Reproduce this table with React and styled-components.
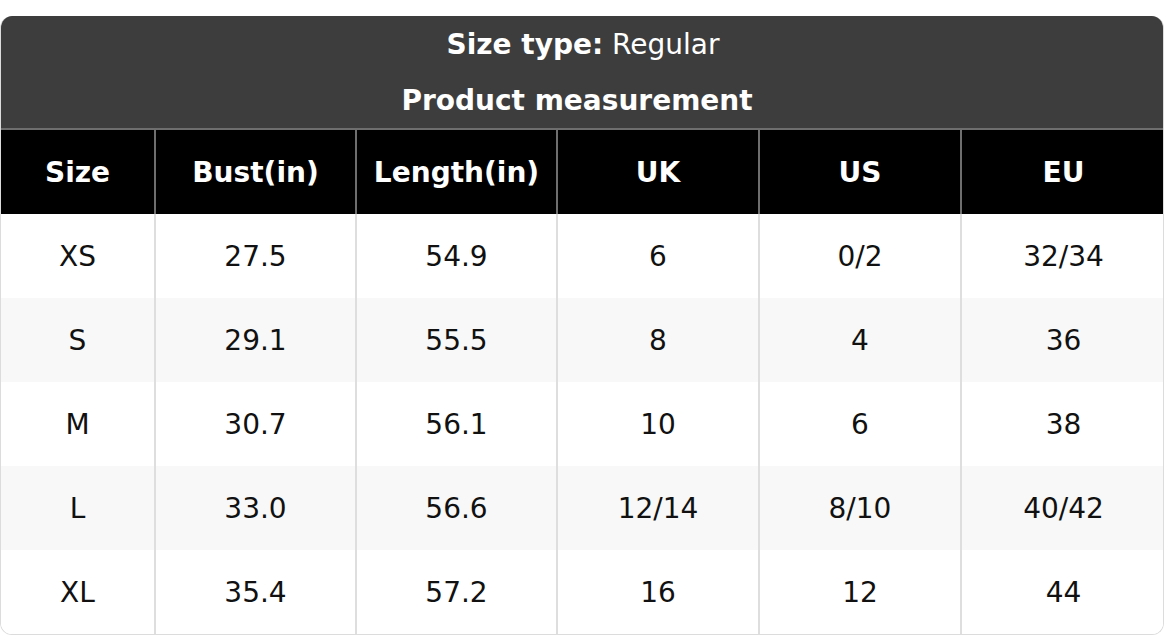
import React from "react";
import styled, { createGlobalStyle } from "styled-components";

const Global = createGlobalStyle`
  html, body { margin: 0; padding: 0; background: #ffffff; }
  body { font-family: "DejaVu Sans", "Liberation Sans", sans-serif; }
`;

const Page = styled.div`
  padding-top: 16px;
`;

const Card = styled.div`
  width: 1164px;
  box-sizing: border-box;
  border: 1px solid #dcdcdc;
  border-top: none;
  border-radius: 12px;
  overflow: hidden;
`;

const Table = styled.table`
  width: 100%;
  border-collapse: collapse;
  table-layout: fixed;
`;

const TitleCell = styled.th`
  background: #3d3d3d;
  color: #ffffff;
  height: 56px;
  padding: 0 ${(p) => p.$shift || 0}px 0 0;
  font-size: 28px;
  font-weight: ${(p) => (p.$light ? "normal" : "bold")};
  text-align: center;
  vertical-align: middle;
`;

const Strong = styled.span`
  font-weight: bold;
`;

const HeadCell = styled.th`
  background: #000000;
  color: #ffffff;
  height: 84px;
  padding: 0;
  font-size: 28px;
  font-weight: bold;
  text-align: center;
  border-top: 2px solid #6e6e6e;
  border-left: 2px solid #6e6e6e;
  &:first-child { border-left: none; }
`;

const Row = styled.tr`
  background: ${(p) => (p.$alt ? "#f8f8f8" : "#ffffff")};
`;

const Cell = styled.td`
  height: 84px;
  padding: 0;
  font-size: 28px;
  color: #111111;
  text-align: center;
  border-left: 2px solid #dedede;
  &:first-child { border-left: none; }
`;

const widths = [154, 201, 201, 202, 202, 204];
const headers = ["Size", "Bust(in)", "Length(in)", "UK", "US", "EU"];
const rows = [
  ["XS", "27.5", "54.9", "6", "0/2", "32/34"],
  ["S", "29.1", "55.5", "8", "4", "36"],
  ["M", "30.7", "56.1", "10", "6", "38"],
  ["L", "33.0", "56.6", "12/14", "8/10", "40/42"],
  ["XL", "35.4", "57.2", "16", "12", "44"],
];

export default function App() {
  return (
    <Page>
      <Global />
      <Card>
        <Table>
          <colgroup>
            {widths.map((w, i) => (
              <col key={i} style={{ width: w }} />
            ))}
          </colgroup>
          <thead>
            <tr>
              <TitleCell colSpan={6} $light>
                <Strong>Size type:</Strong> Regular
              </TitleCell>
            </tr>
            <tr>
              <TitleCell colSpan={6} $shift={12}>
                Product measurement
              </TitleCell>
            </tr>
            <tr>
              {headers.map((h) => (
                <HeadCell key={h}>{h}</HeadCell>
              ))}
            </tr>
          </thead>
          <tbody>
            {rows.map((r, i) => (
              <Row key={r[0]} $alt={i % 2 === 1}>
                {r.map((c, j) => (
                  <Cell key={j}>{c}</Cell>
                ))}
              </Row>
            ))}
          </tbody>
        </Table>
      </Card>
    </Page>
  );
}
